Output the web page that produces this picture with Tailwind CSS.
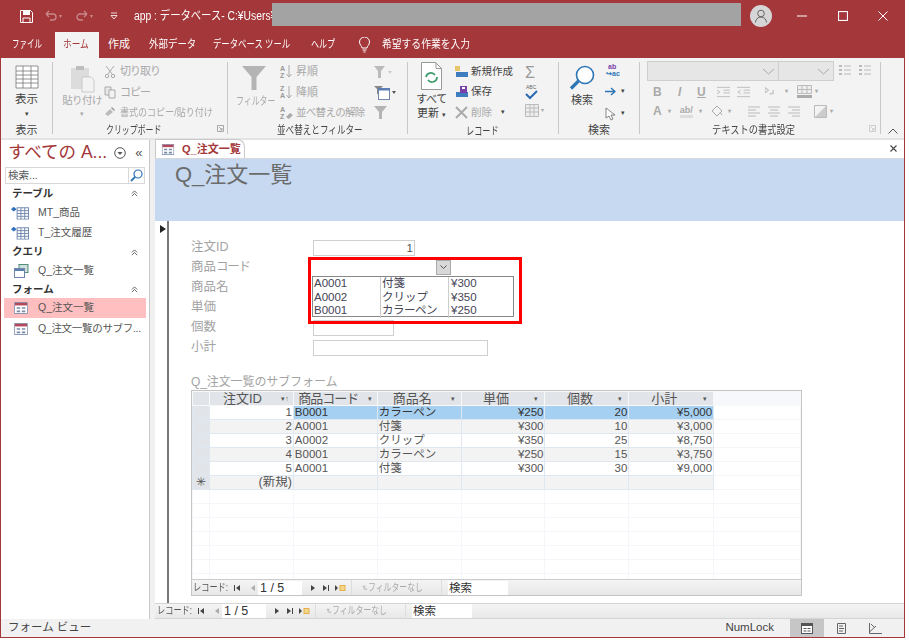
<!DOCTYPE html>
<html lang="ja">
<head>
<meta charset="utf-8">
<title>app</title>
<script src="https://cdn.jsdelivr.net/npm/@tailwindcss/browser@4"></script>
</head>
<body class="bg-white">
<svg class="hidden">
    <symbol id="first" viewBox="0 0 8 8"><path d="M1 1h1v6H1zM7 1v6L3 4z" fill="#444"/></symbol>
    <symbol id="prev" viewBox="0 0 8 8"><path d="M6 1v6L2 4z" fill="#aaa"/></symbol>
    <symbol id="next" viewBox="0 0 8 8"><path d="M2 1v6l4-3z" fill="#444"/></symbol>
    <symbol id="last" viewBox="0 0 8 8"><path d="M1 1v6l4-3zM6 1h1v6H6z" fill="#444"/></symbol>
    <symbol id="new" viewBox="0 0 12 8"><path d="M1 1v6l3-3z" fill="#444"/><rect x="6" y="1.500" width="5" height="5" fill="#f4d78a" stroke="#e3b04b"/></symbol>
    <symbol id="nofilter" viewBox="0 0 16 14"><path d="M1 1h10L7.500 5.500V11h-3V5.500z" fill="#b8b8b8"/><path d="M9 8l5 5M14 8l-5 5" stroke="#999" stroke-width="1.500"/></symbol>
    <symbol id="form" viewBox="0 0 16 14"><rect x=".5" y=".5" width="15" height="13" fill="#fff" stroke="#7a8aa8"/><rect x="1" y="1" width="14" height="3" fill="#b5495b"/><path d="M3 6h4v2H3zM9 6h4v2H9zM3 10h4v2H3zM9 10h4v2H9z" fill="#7a8aa8"/></symbol>
    <symbol id="table" viewBox="0 0 20 14"><path d="M1 3l3-2.500 3 2.500-3 2.500z" fill="#2f6fbd"/><rect x="7.500" y="1.500" width="12" height="12" fill="#fff" stroke="#6f86ad"/><path d="M7.500 4.500h12M7.500 7.500h12M7.500 10.500h12M11.500 1.500v12M15.500 1.500v12" stroke="#6f86ad"/></symbol>
    <symbol id="updown" viewBox="0 0 8 8"><path d="M1 4l3-3 3 3M1 7l3-3 3 3" fill="none" stroke="#555"/></symbol>
    <symbol id="sortarrow" viewBox="0 0 6 13"><path d="M3 0v12M.5 9L3 12l2.500-3" fill="none" stroke="#aaa"/></symbol>
</svg>

<div class="relative w-[905px] h-[638px] flex flex-col border-x border-b border-[#a4373a] font-['Liberation_Sans','Noto_Sans_CJK_JP',sans-serif] text-[#444] overflow-hidden">

    <!-- Title bar -->
    <div class="h-[32px] shrink-0 bg-[#a4373a] -mx-px flex items-center text-white text-[12px]">
        <svg class="ml-[20px] w-[13px] h-[13px]" viewBox="0 0 13 13"><path d="M.5.500h10l2 2v10H.5z" fill="none" stroke="#fff"/><path d="M3 1h7v4H3z" fill="#fff"/><path d="M3 8h7v4.500H3z" fill="none" stroke="#fff"/></svg>
        <svg class="ml-[12px] w-[12px] h-[12px] opacity-40" viewBox="0 0 12 12"><path d="M1 4h7a3 3 0 010 6H5M1 4l3-3M1 4l3 3" fill="none" stroke="#fff" stroke-width="1.300"/></svg>
        <span class="ml-[2px] text-[6px] opacity-40">▾</span>
        <svg class="ml-[14px] w-[12px] h-[12px] opacity-40" viewBox="0 0 12 12"><path d="M11 4H4a3 3 0 000 6h3M11 4L8 1M11 4L8 7" fill="none" stroke="#fff" stroke-width="1.300"/></svg>
        <span class="ml-[2px] text-[6px] opacity-40">▾</span>
        <svg class="ml-[17px] w-[8px] h-[8px]" viewBox="0 0 8 8"><path d="M1 1h6M1 3.500h6L4 7z" fill="none" stroke="#fff" stroke-width=".8"/></svg>
        <div class="ml-[16px] w-[138px] whitespace-nowrap"><span class="inline-block origin-left scale-x-[.86] text-[12px]">app : データベース- C:¥Users¥</span></div>
        <div class="w-[469px] h-[23px] mt-[-3px] bg-[#a3a3a3] blur-[.6px]"></div>
        <div class="ml-[9px] w-[22px] h-[22px] rounded-full bg-[#d6d6d6] flex items-center justify-center">
            <svg class="w-[14px] h-[14px]" viewBox="0 0 14 14"><circle cx="7" cy="4.500" r="3.300" fill="none" stroke="#666"/><path d="M1.500 13.500a5.500 5.500 0 0111 0" fill="none" stroke="#666"/></svg>
        </div>
        <svg class="ml-[25px] w-[10px] h-[10px]" viewBox="0 0 10 10"><path d="M0 5h10" stroke="#fff"/></svg>
        <svg class="ml-[31px] w-[10px] h-[10px]" viewBox="0 0 10 10"><rect x=".5" y=".5" width="9" height="9" fill="none" stroke="#fff" stroke-width="1.200"/></svg>
        <svg class="ml-[30px] w-[10px] h-[10px]" viewBox="0 0 10 10"><path d="M.5.500l9 9M9.500.500l-9 9" stroke="#fff"/></svg>
    </div>

    <!-- Tabs -->
    <div class="h-[26px] shrink-0 bg-[#a4373a] -mx-px flex items-end text-white text-[11px] whitespace-nowrap">
        <div class="w-[55px] h-[26px] pl-[12px] pt-[4px]"><span class="inline-block origin-left scale-x-[.68]">ファイル</span></div>
        <div class="w-[44px] h-[26px] bg-[#f3f3f3] text-[#a4373a] pl-[8px] pt-[4px]"><span class="inline-block origin-left scale-x-[.79]">ホーム</span></div>
        <div class="ml-[9px] w-[41px] h-[26px] pt-[4px]">作成</div>
        <div class="w-[64px] h-[26px] pt-[4px]"><span class="inline-block origin-left scale-x-[.86]">外部データ</span></div>
        <div class="w-[98px] h-[26px] pt-[4px]"><span class="inline-block origin-left scale-x-[.76]">データベース ツール</span></div>
        <div class="w-[47px] h-[26px] pt-[4px]"><span class="inline-block origin-left scale-x-[.73]">ヘルプ</span></div>
        <svg class="mb-[5px] w-[13px] h-[16px]" viewBox="0 0 13 16"><path d="M4 11c0-2-2.500-3-2.500-6a5 5 0 0110 0c0 3-2.500 4-2.500 6zM4.500 13h4M5.500 15h2" fill="none" stroke="#fff"/></svg>
        <div class="ml-[11px] h-[26px] pt-[4px]"><span class="inline-block origin-left scale-x-[.89]">希望する作業を入力</span></div>
    </div>

    <!-- Ribbon -->
    <div class="h-[82px] shrink-0 bg-[#f3f3f3] border-b-[2px] border-[#e4e4e4] flex text-[11px] text-[#a8a8a8] whitespace-nowrap">
        <!-- 表示 -->
        <div class="w-[51px] flex flex-col items-center">
            <div class="flex-1 flex flex-col items-center pt-[7px]">
                <svg class="w-[24px] h-[24px]" viewBox="0 0 24 24"><path d="M1 1h22v22H1zM1 6h22M1 10h22M1 14h22M1 18h22M8 1v22M16 1v22" fill="#fff" stroke="#777" stroke-width=".8"/></svg>
                <span class="mt-[2px] text-[#444] text-[11.500px]">表示</span>
                <span class="text-[#444] text-[7px] leading-[12px]">▾</span>
            </div>
            <div class="h-[17px] pt-[1px] text-[#444] text-[11px]">表示</div>
        </div>
        <div class="w-px my-[4px] bg-[#c8c8c8]"></div>
        <!-- クリップボード -->
        <div class="w-[174px] flex flex-col">
            <div class="flex-1 flex pt-[4px]">
                <div class="w-[58px] flex flex-col items-center">
                    <svg class="w-[26px] h-[29px] mt-[2px]" viewBox="0 0 26 29"><path d="M2 4h18v21H2z" fill="#dcdcdc"/><path d="M7 2h8v4H7z" fill="#bdbdbd"/><path d="M13 13h9l3 3v12H13z" fill="#f3f3f3" stroke="#c9c9c9"/></svg>
                    <span class="mt-[0px] text-[10.500px] tracking-[-0.6px]">貼り付け</span>
                    <span class="text-[7px] leading-[10px]">▾</span>
                </div>
                <div class="-ml-[7px] flex flex-col gap-[3.500px] pt-[1px]">
                    <div class="flex items-center h-[17px]">
                        <svg class="w-[12px] h-[13px] mr-[4px]" viewBox="0 0 12 13"><path d="M2 1l6 8M10 1L4 9" stroke="#aaa"/><circle cx="3" cy="11" r="1.700" fill="none" stroke="#aaa"/><circle cx="9" cy="11" r="1.700" fill="none" stroke="#aaa"/></svg><span class="tracking-[-1px]">切り取り</span>
                    </div>
                    <div class="flex items-center h-[17px]">
                        <svg class="w-[12px] h-[13px] mr-[4px]" viewBox="0 0 12 13"><path d="M1 1h6v8H1z" fill="#e8e8e8" stroke="#aaa"/><path d="M5 4h6v8H5z" fill="#f3f3f3" stroke="#aaa"/></svg><span class="tracking-[-1px]">コピー</span>
                    </div>
                    <div class="flex items-center h-[17px]">
                        <svg class="w-[12px] h-[13px] mr-[4px]" viewBox="0 0 12 13"><path d="M1 8l5-5 3 3-5 4z" fill="#bbb"/><path d="M8 1l3 3-1 1-3-3z" fill="#999"/></svg><span class="inline-block w-[94px] text-[10.500px]"><span class="inline-block origin-left scale-x-[.86]">書式のコピー/貼り付け</span></span>
                    </div>
                </div>
            </div>
            <div class="h-[17px] pt-[1px] relative pl-[53px] text-[#444]"><span class="inline-block origin-left scale-x-[.72]">クリップボード</span>
                <svg class="absolute right-[3px] top-[4px] w-[7px] h-[7px]" viewBox="0 0 7 7"><path d="M.5.500h6v6h-6zM2 2l3 3M5 3v2H3" fill="none" stroke="#888" stroke-width=".7"/></svg>
            </div>
        </div>
        <div class="w-px my-[4px] bg-[#c8c8c8]"></div>
        <!-- 並べ替えとフィルター -->
        <div class="w-[179px] flex flex-col">
            <div class="flex-1 flex pt-[4px]">
                <div class="w-[52px] flex flex-col items-center">
                    <svg class="w-[24px] h-[24px] mt-[4px]" viewBox="0 0 24 24"><path d="M0 0h24L14.500 11v13h-5V11z" fill="#b4b4b4"/></svg>
                    <div class="mt-[3px] w-[37px]"><span class="inline-block origin-left scale-x-[.72]">フィルター</span></div>
                </div>
                <div class="flex flex-col gap-[3.500px] pt-[1px] w-[94px]">
                    <div class="flex items-center h-[17px]"><div class="w-[16px] flex items-center"><span class="text-[7px] leading-[7px] font-bold text-[#999]">A<br>Z</span><svg class="ml-[1px] w-[6px] h-[13px]" viewBox="0 0 6 13"><use href="#sortarrow"/></svg></div><span>昇順</span></div>
                    <div class="flex items-center h-[17px]"><div class="w-[16px] flex items-center"><span class="text-[7px] leading-[7px] font-bold text-[#999]">Z<br>A</span><svg class="ml-[1px] w-[6px] h-[13px]" viewBox="0 0 6 13"><use href="#sortarrow"/></svg></div><span>降順</span></div>
                    <div class="flex items-center h-[17px]"><div class="w-[16px] flex items-center"><span class="text-[7px] leading-[7px] font-bold text-[#999]">A<br>Z</span><svg class="ml-[1px] w-[7px] h-[7px] mt-[5px]" viewBox="0 0 7 7"><path d="M0 5l4-4 3 2-4 4z" fill="#aaa"/></svg></div><span class="text-[10.500px] tracking-[-0.7px]">並べ替えの解除</span></div>
                </div>
                <div class="flex flex-col gap-[5px] pt-[3px]">
                    <svg class="w-[19px] h-[15px]" viewBox="0 0 19 15"><path d="M0 1h11L7 6v7H4V6z" fill="#bbb"/><path d="M14 6l4 0-2 3z" fill="#ccc"/></svg>
                    <svg class="w-[22px] h-[16px]" viewBox="0 0 22 16"><path d="M0 1h9L6 4v5H3V4z" fill="#888"/><rect x="4.500" y="3.500" width="11" height="11" fill="#fff" stroke="#6f86ad"/><path d="M4 3h12v2.500H4z" fill="#5b7fb0"/><path d="M18 6h4l-2 3z" fill="#555"/></svg>
                    <svg class="w-[13px] h-[13px]" viewBox="0 0 13 13"><path d="M0 0h13L8 6v7H5V6z" fill="#b4b4b4"/></svg>
                </div>
            </div>
            <div class="h-[17px] pt-[1px] pl-[49px] text-[#444]"><span class="inline-block origin-left scale-x-[.78]">並べ替えとフィルター</span></div>
        </div>
        <div class="w-px my-[4px] bg-[#c8c8c8]"></div>
        <!-- レコード -->
        <div class="w-[150px] flex flex-col">
            <div class="flex-1 flex pt-[4px]">
                <div class="w-[47px] flex flex-col items-center text-[#444]">
                    <svg class="w-[21px] h-[28px]" viewBox="0 0 21 28"><path d="M.5.500h14l6 6v21H.5z" fill="#fff" stroke="#999"/><path d="M15 .500v6h6" fill="none" stroke="#999"/><path d="M5 15a5 5 0 019-2M16 15a5 5 0 01-9 3" fill="none" stroke="#3f9b6e" stroke-width="1.800"/></svg>
                    <span class="mt-[2px] leading-[14px] tracking-[-0.5px]">すべて</span>
                    <span class="leading-[14px]">更新 <span class="text-[7px]">▾</span></span>
                </div>
                <div class="flex flex-col gap-[3.500px] pt-[1px] w-[70px]">
                    <div class="flex items-center h-[17px] text-[#444] text-[10.500px]">
                        <svg class="w-[13px] h-[12px] mr-[3px]" viewBox="0 0 13 12"><path d="M0 0h5v5H0z" fill="#e6c56b"/><rect x="1" y="6" width="12" height="5" fill="#3e7cc0"/></svg>新規作成
                    </div>
                    <div class="flex items-center h-[17px] text-[#444] text-[10.500px]">
                        <svg class="w-[13px] h-[12px] mr-[3px]" viewBox="0 0 13 12"><rect x="1" y="6" width="12" height="5" fill="#3e7cc0"/><path d="M5 0h7v7H5z" fill="#7a3fa8"/><path d="M7 1h3v2H7z" fill="#fff"/></svg>保存
                    </div>
                    <div class="flex items-center h-[17px] text-[10.500px]">
                        <svg class="w-[13px] h-[13px] mr-[3px]" viewBox="0 0 13 13"><path d="M1 1l11 11M12 1L1 12" stroke="#aaa" stroke-width="2"/></svg>削除 <span class="ml-[9px] text-[7px] text-[#444]">▾</span>
                    </div>
                </div>
                <div class="flex flex-col items-start gap-[3px] pt-[2px] w-[24px]">
                    <span class="text-[16px] leading-[17px] text-[#999]">Σ</span>
                    <svg class="w-[13px] h-[17px]" viewBox="0 0 13 17"><text x="1" y="5" font-size="5" fill="#666">ABC</text><path d="M1 10l4 4 7-7" fill="none" stroke="#2c6ab0" stroke-width="2"/></svg>
                    <div class="flex items-center gap-[2px]"><svg class="w-[14px] h-[13px]" viewBox="0 0 14 13"><path d="M.5.500h13v12H.5zM.5 4h13M.5 8h13M5 .500v12M9 .500v12" fill="#eee" stroke="#bbb"/></svg><span class="text-[6px]">▾</span></div>
                </div>
            </div>
            <div class="h-[17px] pt-[1px] text-[#444] pl-[58px]"><span class="inline-block origin-left scale-x-[.74]">レコード</span></div>
        </div>
        <div class="w-px my-[4px] bg-[#c8c8c8]"></div>
        <!-- 検索 -->
        <div class="w-[80px] flex flex-col">
            <div class="flex-1 flex pt-[4px]">
                <div class="w-[46px] flex flex-col items-center text-[#444]">
                    <svg class="w-[26px] h-[26px] mt-[3px]" viewBox="0 0 26 26"><circle cx="16" cy="10" r="8.500" fill="#fff" stroke="#2e75b6" stroke-width="1.600"/><path d="M9.500 16L2 23.500" stroke="#2e75b6" stroke-width="3.200"/></svg>
                    <span class="mt-[1px]">検索</span>
                </div>
                <div class="flex flex-col gap-[5px] pt-[1px]">
                    <div class="flex flex-col h-[14px] pl-[1px] text-[7px] leading-[7px] font-bold">
                        <span class="text-[#7a3fa8] pl-[2px]">ab</span>
                        <span class="text-[#2e75b6]">↪ac</span>
                    </div>
                    <div class="flex items-center gap-[5px] h-[15px] mt-[2px] text-[#444]"><svg class="w-[11px] h-[9px]" viewBox="0 0 11 9"><path d="M0 4.500h9M6 1l4 3.500L6 8" fill="none" stroke="#2e75b6" stroke-width="1.500"/></svg><span class="text-[7px]">▾</span></div>
                    <div class="flex items-center gap-[5px] h-[15px] mt-[2px] text-[#444]"><svg class="w-[11px] h-[14px]" viewBox="0 0 11 14"><path d="M1 1v10l3-2 2 4 2-1-2-4h4z" fill="#fff" stroke="#555" stroke-width=".7"/></svg><span class="text-[7px]">▾</span></div>
                </div>
            </div>
            <div class="h-[17px] pt-[1px] text-center text-[#444]">検索</div>
        </div>
        <div class="w-px my-[4px] bg-[#c8c8c8]"></div>
        <!-- テキストの書式設定 -->
        <div class="w-[240px] flex flex-col">
            <div class="flex-1 flex flex-col pl-[7px] pt-[3px]">
                <div class="flex h-[20px]">
                    <div class="w-[132px] bg-[#e6e6e6] border border-[#cfcfcf] flex items-center justify-end pr-[3px]"><svg class="w-[13px] h-[7px]" viewBox="0 0 13 7"><path d="M1 1l5.500 5L12 1" fill="none" stroke="#aaa"/></svg></div>
                    <div class="w-[55px] bg-[#e6e6e6] border border-[#cfcfcf] border-l-0 flex items-center justify-end pr-[3px]"><svg class="w-[13px] h-[7px]" viewBox="0 0 13 7"><path d="M1 1l5.500 5L12 1" fill="none" stroke="#aaa"/></svg></div>
                    <svg class="ml-[4px] w-[34px] h-[14px] mt-[2px]" viewBox="0 0 34 14"><path d="M1 2h3v2H1zM1 6h3v2H1zM1 10h3v2H1zM21 2h3v2h-3zM21 6h3v2h-3zM21 10h3v2h-3z" fill="#bbb"/><path d="M6 3h7M6 7h7M6 11h7M26 3h7M26 7h7M26 11h7" stroke="#bbb"/></svg>
                </div>
                <div class="flex items-center h-[19px] mt-[1px] text-[12px] font-bold text-[#aaa] pl-[6px]">
                    <span class="w-[25px]">B</span><span class="w-[19px] italic">I</span><span class="w-[20px] underline">U</span>
                    <svg class="w-[13px] h-[12px]" viewBox="0 0 14 12"><path d="M0 1h14M7 4h7M7 7h7M0 11h14M0 4l3 2-3 2" fill="none" stroke="#bbb"/></svg>
                    <svg class="w-[13px] h-[12px] ml-[7px]" viewBox="0 0 14 12"><path d="M0 1h14M7 4h7M7 7h7M0 11h14M4 4L1 6l3 2" fill="none" stroke="#bbb"/></svg>
                    <svg class="w-[9px] h-[10px] ml-[15px]" viewBox="0 0 10 10"><path d="M0 0l4 3-4 3zM9 3v4H5" fill="none" stroke="#aaa"/></svg>
                    <span class="text-[6px] ml-[11px]">▾</span>
                    <svg class="ml-[9px] w-[15px] h-[13px]" viewBox="0 0 15 13"><path d="M.5.500h14v8H.5zM.5 4.500h14M5 .500v8M10 .500v8" fill="#eee" stroke="#bbb"/><path d="M0 10h15v3H0z" fill="#aaa"/></svg>
                    <span class="text-[6px] ml-[3px]">▾</span>
                </div>
                <div class="flex items-center h-[20px] text-[12px] font-bold text-[#aaa] gap-[9px] pl-[6px]">
                    <span>A</span><span class="text-[6px] -ml-[3px]">▾</span>
                    <span class="text-[9px] border-b-[3px] border-[#ddd] leading-[10px]">ab/</span><span class="text-[6px] -ml-[3px]">▾</span>
                    <svg class="w-[12px] h-[12px]" viewBox="0 0 12 12"><path d="M1 6l5-5 5 5-5 5z" fill="none" stroke="#aaa"/><path d="M9 7l2 3" stroke="#aaa"/></svg><span class="text-[6px] -ml-[4px]">▾</span>
                    <svg class="w-[52px] h-[12px] ml-[8px]" viewBox="0 0 52 12"><path d="M0 2h12M0 5h8M0 8h12M0 11h8M20 2h12M22 5h8M20 8h12M22 11h8M40 2h12M44 5h8M40 8h12M44 11h8" stroke="#bbb"/></svg>
                    <svg class="w-[13px] h-[13px] ml-[5px]" viewBox="0 0 13 13"><path d="M.5.500h12v12H.5z" fill="none" stroke="#bbb"/><path d="M1 12L12 1v11z" fill="#ccc"/></svg><span class="text-[6px] -ml-[6px]">▾</span>
                </div>
            </div>
            <div class="h-[17px] pt-[1px] relative text-[#444] pl-[72px]"><span class="inline-block origin-left scale-x-[.84]">テキストの書式設定</span>
                <svg class="absolute right-[4px] top-[4px] w-[7px] h-[7px]" viewBox="0 0 7 7"><path d="M.5.500h6v6h-6zM2 2l3 3M5 3v2H3" fill="none" stroke="#bbb" stroke-width=".7"/></svg>
            </div>
        </div>
        <div class="w-px my-[4px] bg-[#c8c8c8]"></div>
        <div class="flex-1 flex items-end justify-end pb-[2px] pr-[6px]">
            <svg class="w-[10px] h-[6px] mb-[2px]" viewBox="0 0 10 6"><path d="M.5 5.500L5 1l4.500 4.500" fill="none" stroke="#555"/></svg>
        </div>
    </div>

    <!-- Main -->
    <div class="flex-1 min-h-0 flex">
        <!-- Navigation pane -->
        <div class="w-[149px] shrink-0 flex flex-col border-r border-[#c8c8c8] text-[10.500px] text-[#555] whitespace-nowrap">
            <div class="h-[27px] flex items-center pl-[7px] pb-[2px] text-[#a4373a] text-[17.500px]">
                <span>すべての A...</span>
                <svg class="ml-[7px] w-[12px] h-[12px]" viewBox="0 0 12 12"><circle cx="6" cy="6" r="5.300" fill="none" stroke="#555"/><path d="M3.500 5h5L6 8z" fill="#555"/></svg>
                <span class="ml-[9px] text-[#555] text-[13px] leading-[13px]">«</span>
            </div>
            <div class="mx-[4px] h-[17px] shrink-0 flex border border-[#d8d8d8]">
                <span class="flex-1 pl-[2px] text-[#555] leading-[15px]">検索...</span>
                <div class="w-[16px] border-l border-[#d8d8d8] flex items-center justify-center"><svg class="w-[13px] h-[13px]" viewBox="0 0 13 13"><circle cx="8" cy="5" r="4" fill="#fff" stroke="#2e75b6" stroke-width="1.200"/><path d="M5 8l-4 4" stroke="#2e75b6" stroke-width="1.800"/></svg></div>
            </div>
            <div class="h-[19px] flex items-center justify-between px-[11px] text-[#333] font-bold">テーブル<svg class="w-[7px] h-[7px]" viewBox="0 0 8 8"><use href="#updown"/></svg></div>
            <div class="h-[20px] flex items-center pl-[9px]"><svg class="w-[19px] h-[14px] mr-[9px]" viewBox="0 0 20 14"><use href="#table"/></svg>MT_商品</div>
            <div class="h-[20px] flex items-center pl-[9px]"><svg class="w-[19px] h-[14px] mr-[9px]" viewBox="0 0 20 14"><use href="#table"/></svg>T_注文履歴</div>
            <div class="h-[18px] flex items-center justify-between px-[11px] text-[#333] font-bold">クエリ<svg class="w-[7px] h-[7px]" viewBox="0 0 8 8"><use href="#updown"/></svg></div>
            <div class="h-[20px] flex items-center pl-[13px]"><svg class="w-[15px] h-[14px] mr-[9px]" viewBox="0 0 15 14"><rect x="5" y=".5" width="9" height="8" fill="#cfe0d8" stroke="#4f8a7a"/><rect x=".5" y="4.500" width="10" height="9" fill="#fff" stroke="#6f86ad"/><path d="M1 5h9v2H1z" fill="#5b7fb0"/></svg>Q_注文一覧</div>
            <div class="h-[17px] flex items-center justify-between px-[11px] text-[#333] font-bold">フォーム<svg class="w-[7px] h-[7px]" viewBox="0 0 8 8"><use href="#updown"/></svg></div>
            <div class="h-[20px] mx-[3px] flex items-center pl-[10px] bg-[#ffbfc0]"><svg class="w-[14px] h-[12px] mr-[10px]" viewBox="0 0 16 14"><use href="#form"/></svg>Q_注文一覧</div>
            <div class="h-[21px] mx-[3px] flex items-center pl-[10px]"><svg class="w-[14px] h-[12px] mr-[10px]" viewBox="0 0 16 14"><use href="#form"/></svg><span class="tracking-[-0.3px]">Q_注文一覧のサブフ...</span></div>
        </div>

        <!-- Splitter -->
        <div class="w-[5px] shrink-0 bg-[#f0f0f0]"></div>

        <!-- Document area -->
        <div class="flex-1 min-w-0 flex flex-col">
            <div class="h-[19px] shrink-0 flex items-end justify-between border-b border-[#d8d8d8]">
                <div class="relative w-[90px] h-[19px] border border-b-0 border-[#c9c9c9] rounded-tr-[8px] flex items-center pl-[5px] text-[#a4373a] text-[11px] font-bold">
                    <svg class="w-[14px] h-[11px] mr-[7px]" viewBox="0 0 16 14"><use href="#form"/></svg>Q_注文一覧
                </div>
                <svg class="w-[7px] h-[7px] mr-[7px] mb-[6px]" viewBox="0 0 7 7"><path d="M.5.500l6 6M6.500.500l-6 6" stroke="#444" stroke-width="1.100"/></svg>
            </div>

            <!-- Form header -->
            <div class="h-[62px] shrink-0 bg-[#c6d9f1] pl-[20px] pt-[1px] text-[22px] text-[#6b6b6b] leading-[30px]">Q_注文一覧</div>

            <div class="flex-1 min-h-0 flex">
                <!-- Record selector -->
                <div class="w-[14px] shrink-0 border-r-2 border-[#777] pt-[4px] pl-[5px]">
                    <svg class="w-[6px] h-[8px]" viewBox="0 0 6 8"><path d="M0 0l6 4-6 4z" fill="#222"/></svg>
                </div>
                <!-- Form detail -->
                <div class="flex-1 min-w-0 relative pl-[22px] pt-[17px]">
                    <div class="grid grid-cols-[122px_1fr] auto-rows-[20px] items-center text-[12.500px] text-[#a3a3a3] [&>span]:-mt-[2px]">
                        <span>注文ID</span>
                        <div class="w-[102px] h-[16px] border border-[#cfcfcf] text-right pr-[1px] leading-[14px] text-[#555] text-[11.500px]">1</div>
                        <span>商品<span class="tracking-[-1.200px]">コード</span></span>
                        <div class="w-[138px] h-[14px] -mt-[3px] flex justify-end"><div class="w-[15px] h-[15px] bg-[#d8d8d8] border border-[#aaa] flex items-center justify-center"><svg class="w-[7px] h-[4px]" viewBox="0 0 7 4"><path d="M.5.500L3.500 3.500 6.500.500" fill="none" stroke="#555"/></svg></div></div>
                        <span>商品名</span><span></span>
                        <span>単価</span><span></span>
                        <span>個数</span>
                        <div class="w-[81px] h-[16px] border border-[#cfcfcf]"></div>
                        <span>小計</span>
                        <div class="w-[175px] h-[16px] border border-[#cfcfcf]"></div>
                    </div>

                    <!-- Subform -->
                    <div class="mt-[17px] text-[12px] text-[#a3a3a3] leading-[15px] tracking-[-0.1px]">Q_注文一覧のサブフォーム</div>
                    <div class="w-[611px] h-[206px] border border-[#c4c4c4] flex flex-col">
                        <div class="flex-1 min-h-0 overflow-hidden">
                            <table class="table-fixed border-collapse text-[11.500px] text-[#555] leading-[13px] [&_td]:h-[14px] [&_td]:border [&_td]:border-[#dfe7f1] [&_td]:px-[1px] [&_td]:py-0 [&_td]:overflow-hidden [&_td]:whitespace-nowrap [&_th]:h-[13px] [&_th]:border [&_th]:border-[#f8f8f8] [&_th]:bg-[#e1e4e8] [&_th]:font-normal [&_th]:relative">
                                <colgroup><col class="w-[17px]"><col class="w-[84px]"><col class="w-[84px]"><col class="w-[84px]"><col class="w-[84px]"><col class="w-[84px]"><col class="w-[85px]"><col class="w-[87px]"></colgroup>
                                <tr class="text-[13px]">
                                    <th></th>
                                    <th class="pr-[18px]">注文ID<span class="absolute right-[4px] top-0 text-[7px]">▾↑</span></th>
                                    <th class="pr-[14px] tracking-[-1px]">商品コード<span class="absolute right-[6px] top-0 text-[7px]">▾</span></th>
                                    <th class="pr-[14px]">商品名<span class="absolute right-[6px] top-0 text-[7px]">▾</span></th>
                                    <th class="pr-[14px]">単価<span class="absolute right-[6px] top-0 text-[7px]">▾</span></th>
                                    <th class="pr-[14px]">個数<span class="absolute right-[6px] top-0 text-[7px]">▾</span></th>
                                    <th class="pr-[14px]">小計<span class="absolute right-[6px] top-0 text-[7px]">▾</span></th>
                                    <th class="!bg-[#f6f8fb]"></th>
                                </tr>
                                <tr><td class="bg-[#e1e4e8]"></td><td class="text-right">1</td><td class="bg-[#a6d0f2] text-[#333]">B0001</td><td class="bg-[#a6d0f2] text-[#333]">カラーペン</td><td class="bg-[#a6d0f2] text-[#333] text-right">¥250</td><td class="bg-[#a6d0f2] text-[#333] text-right">20</td><td class="bg-[#a6d0f2] text-[#333] text-right">¥5,000</td><td class="!border-[#f4f6f9] bg-white"></td></tr>
                                <tr class="bg-[#f3f3f3]"><td class="bg-[#e1e4e8]"></td><td class="text-right">2</td><td>A0001</td><td>付箋</td><td class="text-right">¥300</td><td class="text-right">10</td><td class="text-right">¥3,000</td><td class="!border-[#f4f6f9] bg-white"></td></tr>
                                <tr><td class="bg-[#e1e4e8]"></td><td class="text-right">3</td><td>A0002</td><td>クリップ</td><td class="text-right">¥350</td><td class="text-right">25</td><td class="text-right">¥8,750</td><td class="!border-[#f4f6f9] bg-white"></td></tr>
                                <tr class="bg-[#f3f3f3]"><td class="bg-[#e1e4e8]"></td><td class="text-right">4</td><td>B0001</td><td>カラーペン</td><td class="text-right">¥250</td><td class="text-right">15</td><td class="text-right">¥3,750</td><td class="!border-[#f4f6f9] bg-white"></td></tr>
                                <tr><td class="bg-[#e1e4e8]"></td><td class="text-right">5</td><td>A0001</td><td>付箋</td><td class="text-right">¥300</td><td class="text-right">30</td><td class="text-right">¥9,000</td><td class="!border-[#f4f6f9] bg-white"></td></tr>
                                <tr class="bg-[#f3f3f3]"><td class="bg-[#e1e4e8] text-center">✳</td><td class="text-right text-[12.500px]">(新規)</td><td></td><td></td><td></td><td></td><td></td><td class="!border-[#f4f6f9] bg-white"></td></tr>
                                <tr class="[&_td]:!border-[#f4f6f9]"><td></td><td></td><td></td><td></td><td></td><td></td><td></td><td></td></tr>
                                <tr class="[&_td]:!border-[#f4f6f9]"><td></td><td></td><td></td><td></td><td></td><td></td><td></td><td></td></tr>
                                <tr class="[&_td]:!border-[#f4f6f9]"><td></td><td></td><td></td><td></td><td></td><td></td><td></td><td></td></tr>
                                <tr class="[&_td]:!border-[#f4f6f9]"><td></td><td></td><td></td><td></td><td></td><td></td><td></td><td></td></tr>
                                <tr class="[&_td]:!border-[#f4f6f9]"><td></td><td></td><td></td><td></td><td></td><td></td><td></td><td></td></tr>
                                <tr class="[&_td]:!border-[#f4f6f9]"><td></td><td></td><td></td><td></td><td></td><td></td><td></td><td></td></tr>
                                <tr class="[&_td]:!border-[#f4f6f9]"><td></td><td></td><td></td><td></td><td></td><td></td><td></td><td></td></tr>
                            </table>
                        </div>
                        <!-- Subform record nav -->
                        <div class="h-[16px] shrink-0 border-t border-[#ccc] bg-gradient-to-b from-[#f4f4f4] to-[#e8e8e8] flex items-center text-[10.500px] text-[#555] whitespace-nowrap">
                            <div class="ml-[1px] w-[34px]"><span class="inline-block origin-left scale-x-[.78]">レコード:</span></div>
                            <svg class="ml-[6px] w-[8px] h-[8px]"><use href="#first"/></svg>
                            <svg class="ml-[8px] w-[8px] h-[8px]"><use href="#prev"/></svg>
                            <div class="ml-[1px] w-[44px] h-[14px] bg-white text-[12.500px] leading-[15px] pl-[2px] text-[#333]">1 / 5</div>
                            <svg class="ml-[7px] w-[8px] h-[8px]"><use href="#next"/></svg>
                            <svg class="ml-[5px] w-[8px] h-[8px]"><use href="#last"/></svg>
                            <svg class="ml-[4px] w-[12px] h-[8px]"><use href="#new"/></svg>
                            <div class="ml-[5px] h-[15px] w-[91px] border-x border-[#ddd] flex items-center pl-[10px] text-[#aaa]"><svg class="w-[14px] h-[12px]" viewBox="0 0 16 14"><use href="#nofilter"/></svg><span class="inline-block origin-left scale-x-[.75]">フィルターなし</span></div>
                            <div class="ml-[6px] w-[60px] h-[14px] bg-white text-[11.500px] leading-[15px] pl-[1px] text-[#333]">検索</div>
                        </div>
                    </div>

                    <!-- Combo box list (dropped down) -->
                    <div class="absolute left-[143px] top-[55px] w-[202px] h-[41px] border border-[#888] bg-white grid grid-cols-[67px_68px_1fr] text-[11.500px] text-[#445] leading-[13.500px] pl-[1px]">
                        <div class="border-r border-[#ccc]">A0001<br>A0002<br>B0001</div>
                        <div class="border-r border-[#ccc] pl-[1px]">付箋<br>クリップ<br><span class="tracking-[-0.5px]">カラーペン</span></div>
                        <div class="pl-[2px]">¥300<br>¥350<br>¥250</div>
                    </div>
                    <!-- Red annotation box -->
                    <div class="absolute left-[139px] top-[36px] w-[214px] h-[67px] border-[3px] border-[#f00]"></div>
                </div>
            </div>

            <!-- Outer record nav -->
            <div class="h-[16px] shrink-0 border-y border-[#d4d4d4] bg-gradient-to-b from-[#f4f4f4] to-[#e8e8e8] flex items-center text-[10.500px] text-[#555] whitespace-nowrap">
                <div class="ml-[2px] w-[34px]"><span class="inline-block origin-left scale-x-[.78]">レコード:</span></div>
                <svg class="ml-[6px] w-[8px] h-[8px]"><use href="#first"/></svg>
                <svg class="ml-[8px] w-[8px] h-[8px]"><use href="#prev"/></svg>
                <div class="ml-[1px] w-[44px] h-[14px] bg-white text-[12.500px] leading-[15px] pl-[2px] text-[#333]">1 / 5</div>
                <svg class="ml-[7px] w-[8px] h-[8px]"><use href="#next"/></svg>
                <svg class="ml-[5px] w-[8px] h-[8px]"><use href="#last"/></svg>
                <svg class="ml-[4px] w-[12px] h-[8px]"><use href="#new"/></svg>
                <div class="ml-[5px] h-[15px] w-[91px] border-x border-[#ddd] flex items-center pl-[10px] text-[#aaa]"><svg class="w-[14px] h-[12px]" viewBox="0 0 16 14"><use href="#nofilter"/></svg><span class="inline-block origin-left scale-x-[.75]">フィルターなし</span></div>
                <div class="ml-[6px] w-[60px] h-[14px] bg-white text-[11.500px] leading-[15px] pl-[1px] text-[#333]">検索</div>
            </div>
        </div>
    </div>

    <!-- Status bar -->
    <div class="h-[18px] shrink-0 bg-[#f1f1f1] flex items-center text-[11.500px] text-[#444]">
        <span class="ml-[7px]">フォーム ビュー</span>
        <span class="ml-auto mr-[16px]">NumLock</span>
        <div class="w-[34px] h-[18px] bg-[#c6c6c6] flex items-center justify-center"><svg class="w-[12px] h-[11px]" viewBox="0 0 12 11"><rect x=".5" y=".5" width="11" height="10" fill="#fff" stroke="#555"/><path d="M1 1h10v2H1z" fill="#555"/><path d="M2.500 5h3v1h-3zM6.500 5h3v1h-3zM2.500 7.500h3v1h-3zM6.500 7.500h3v1h-3z" fill="#555"/></svg></div>
        <div class="w-[34px] flex justify-center"><svg class="w-[9px] h-[11px]" viewBox="0 0 9 11"><path d="M.5.500h8v10h-8zM2 3h4M2 5.500h5M2 8h4" fill="none" stroke="#666"/></svg></div>
        <div class="w-[34px] mr-[12px] flex justify-center"><svg class="w-[13px] h-[11px]" viewBox="0 0 13 11"><path d="M.5 0v10.500H13M.5 9L7 3M2 1l4 4" fill="none" stroke="#666"/></svg></div>
    </div>
</div>
</body>
</html>
